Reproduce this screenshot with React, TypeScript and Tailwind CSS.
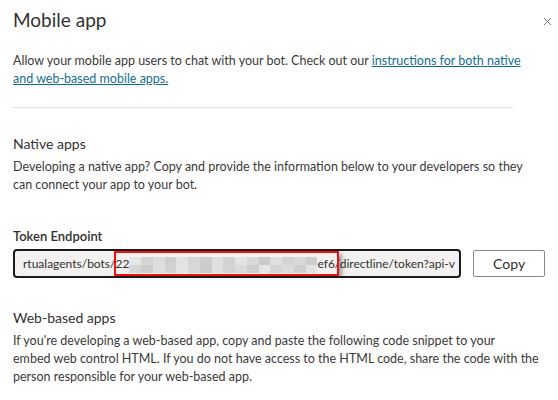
import { X } from 'lucide-react';

const font = { fontFamily: '"Segoe UI", Lato, sans-serif' };

const blurBlocks = [
  '#e6e6e6', '#d4d4d4', '#dcdcdc', '#cfcfcf', '#e2e2e2', '#d6d6d6', '#cdcdcd', '#dedede',
  '#d2d2d2', '#e4e4e4', '#d8d8d8', '#cbcbcb', '#e0e0e0', '#d3d3d3', '#dadada', '#cecece',
];

const RedactedToken = () => (
  <span className="inline-block align-middle h-[16px] w-[188px] overflow-hidden">
    <span className="flex h-full">
      {blurBlocks.map((c, i) => (
        <span key={i} className="flex-1 flex flex-col">
          <span className="flex-1" style={{ background: c }} />
          <span className="flex-1" style={{ background: blurBlocks[(i + 5) % blurBlocks.length] }} />
        </span>
      ))}
    </span>
  </span>
);

export default function App() {
  return (
    <div className="w-[558px] h-[400px] bg-white text-[#323130] overflow-hidden" style={font}>
      <div className="flex items-start justify-between pl-[13px] pr-[4px] pt-[6px]">
        <h1 className="text-[19px] leading-[28px] font-normal text-[#323130]">Mobile app</h1>
        <button className="mt-[9px] text-[#605e5c]">
          <X size={13} strokeWidth={1.5} />
        </button>
      </div>

      <div className="px-[13px]">
        <div className="w-[500px]">
          <p className="mt-[18px] text-[12.5px] leading-[18px] text-[#3b3a39] whitespace-nowrap">
            Allow your mobile app users to chat with your bot. Check out our{' '}
            <a href="#" className="text-[#136f91] underline">
              instructions for both native
              <br />
              and web-based mobile apps.
            </a>
          </p>
          <div className="mt-[19px] h-px bg-[#e1dfdd]" />
        </div>

        <h2 className="mt-[26px] text-[14px] leading-[20px] text-[#323130]">Native apps</h2>
        <p className="mt-[4px] text-[12.5px] leading-[18px] text-[#3b3a39] whitespace-nowrap">
          Developing a native app? Copy and provide the information below to your developers so they
          <br />
          can connect your app to your bot.
        </p>

        <label className="block mt-[33px] text-[13px] leading-[18px] font-semibold text-[#323130]">
          Token Endpoint
        </label>
        <div className="mt-[4px] flex items-center gap-[12px]">
          <div className="relative w-[450px] h-[29px] rounded-[4px] border-2 border-[#1b1a19] bg-[#f3f2f1] overflow-hidden">
            <div className="pl-[8px] leading-[25px] text-[12px] whitespace-nowrap text-[#323130]">
              rtualagents/bots/22
              <RedactedToken />
              ef6/directline/token?api-v
            </div>
            <div className="absolute left-[99px] top-0 w-[225px] h-[25px] border-2 border-[#ee1111] shadow-[3px_3px_4px_rgba(0,0,0,0.35)]" />
          </div>
          <button className="w-[72px] h-[27px] rounded-[2px] border border-[#8a8886] bg-white text-[14px] text-[#323130]">
            Copy
          </button>
        </div>

        <h2 className="mt-[30px] text-[14px] leading-[20px] text-[#323130]">Web-based apps</h2>
        <p className="mt-[4px] text-[12.5px] leading-[18px] text-[#3b3a39] whitespace-nowrap">
          If you're developing a web-based app, copy and paste the following code snippet to your
          <br />
          embed web control HTML. If you do not have access to the HTML code, share the code with the
          <br />
          person responsible for your web-based app.
        </p>
      </div>
    </div>
  );
}
